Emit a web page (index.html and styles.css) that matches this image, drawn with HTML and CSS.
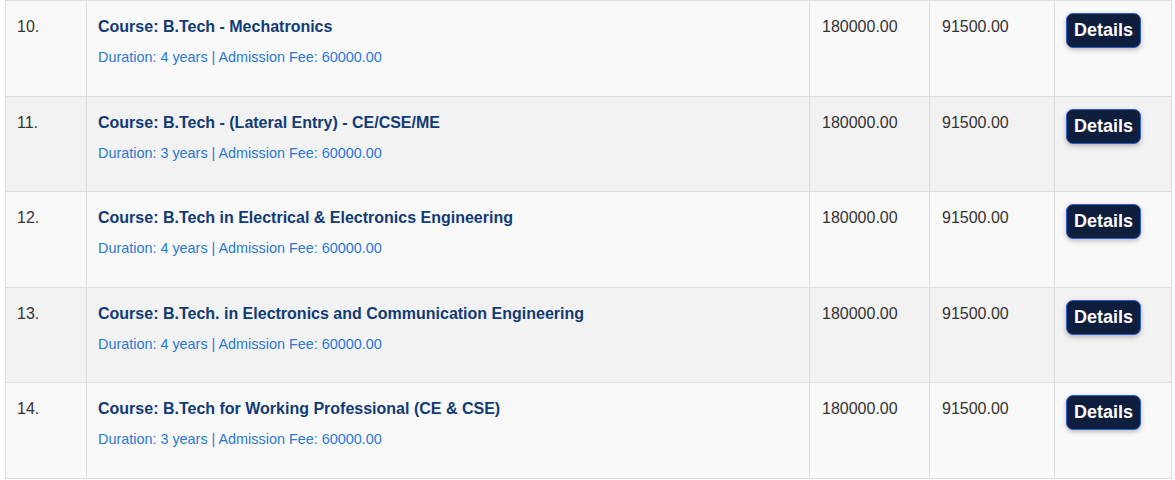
FILE: index.html
```html
<!DOCTYPE html>
<html lang="en">
<head>
<meta charset="utf-8">
<title>Courses</title>
<link rel="stylesheet" href="styles.css">
</head>
<body>
<table class="fees">
  <colgroup>
    <col class="c-no"><col class="c-course"><col class="c-total"><col class="c-sem"><col class="c-act">
  </colgroup>
  <tbody>
    <tr>
      <td>10.</td>
      <td><div class="title">Course: B.Tech - Mechatronics</div><div class="meta">Duration: 4 years | Admission Fee: 60000.00</div></td>
      <td class="num">180000.00</td>
      <td class="num">91500.00</td>
      <td class="act"><button class="btn">Details</button></td>
    </tr>
    <tr>
      <td>11.</td>
      <td><div class="title">Course: B.Tech - (Lateral Entry) - CE/CSE/ME</div><div class="meta">Duration: 3 years | Admission Fee: 60000.00</div></td>
      <td class="num">180000.00</td>
      <td class="num">91500.00</td>
      <td class="act"><button class="btn">Details</button></td>
    </tr>
    <tr>
      <td>12.</td>
      <td><div class="title">Course: B.Tech in Electrical &amp; Electronics Engineering</div><div class="meta">Duration: 4 years | Admission Fee: 60000.00</div></td>
      <td class="num">180000.00</td>
      <td class="num">91500.00</td>
      <td class="act"><button class="btn">Details</button></td>
    </tr>
    <tr>
      <td>13.</td>
      <td><div class="title">Course: B.Tech. in Electronics and Communication Engineering</div><div class="meta">Duration: 4 years | Admission Fee: 60000.00</div></td>
      <td class="num">180000.00</td>
      <td class="num">91500.00</td>
      <td class="act"><button class="btn">Details</button></td>
    </tr>
    <tr>
      <td>14.</td>
      <td><div class="title">Course: B.Tech for Working Professional (CE &amp; CSE)</div><div class="meta">Duration: 3 years | Admission Fee: 60000.00</div></td>
      <td class="num">180000.00</td>
      <td class="num">91500.00</td>
      <td class="act"><button class="btn">Details</button></td>
    </tr>
  </tbody>
</table>
</body>
</html>
```
FILE: styles.css
```css
html, body {
  margin: 0;
  padding: 0;
  background: #ffffff;
}
body {
  font-family: "Liberation Sans", Arial, sans-serif;
  color: #333333;
  font-size: 16px;
}
.fees {
  margin-left: 5px;
  width: 1166px;
  border-collapse: collapse;
  table-layout: fixed;
}
.c-no { width: 81px; }
.c-course { width: 723px; }
.c-total { width: 120px; }
.c-sem { width: 125px; }
.c-act { width: 117px; }
.fees tr {
  height: 95.6px;
  background: #f9f9f9;
}
.fees tr:nth-child(even) {
  background: #f2f2f2;
}
.fees td {
  border: 1px solid #dddddd;
  padding: 14px 11px;
  vertical-align: top;
  line-height: 24px;
}
.fees td.num {
  padding-left: 12px;
}
.title {
  font-weight: bold;
  color: #113b76;
}
.meta {
  margin-top: 8px;
  font-size: 14.4px;
  line-height: 21px;
  color: #2a78d6;
}
.fees td.act {
  padding-top: 12px;
}
.btn {
  display: inline-block;
  font-family: "Liberation Sans", Arial, sans-serif;
  font-weight: bold;
  font-size: 18px;
  line-height: 21px;
  color: #ffffff;
  background: #0f1e3d;
  border: 1px solid #2a5fcf;
  border-radius: 7px;
  padding: 6px 7px;
  box-shadow: 0 2px 5px rgba(0, 0, 0, 0.25);
  cursor: pointer;
}
```
